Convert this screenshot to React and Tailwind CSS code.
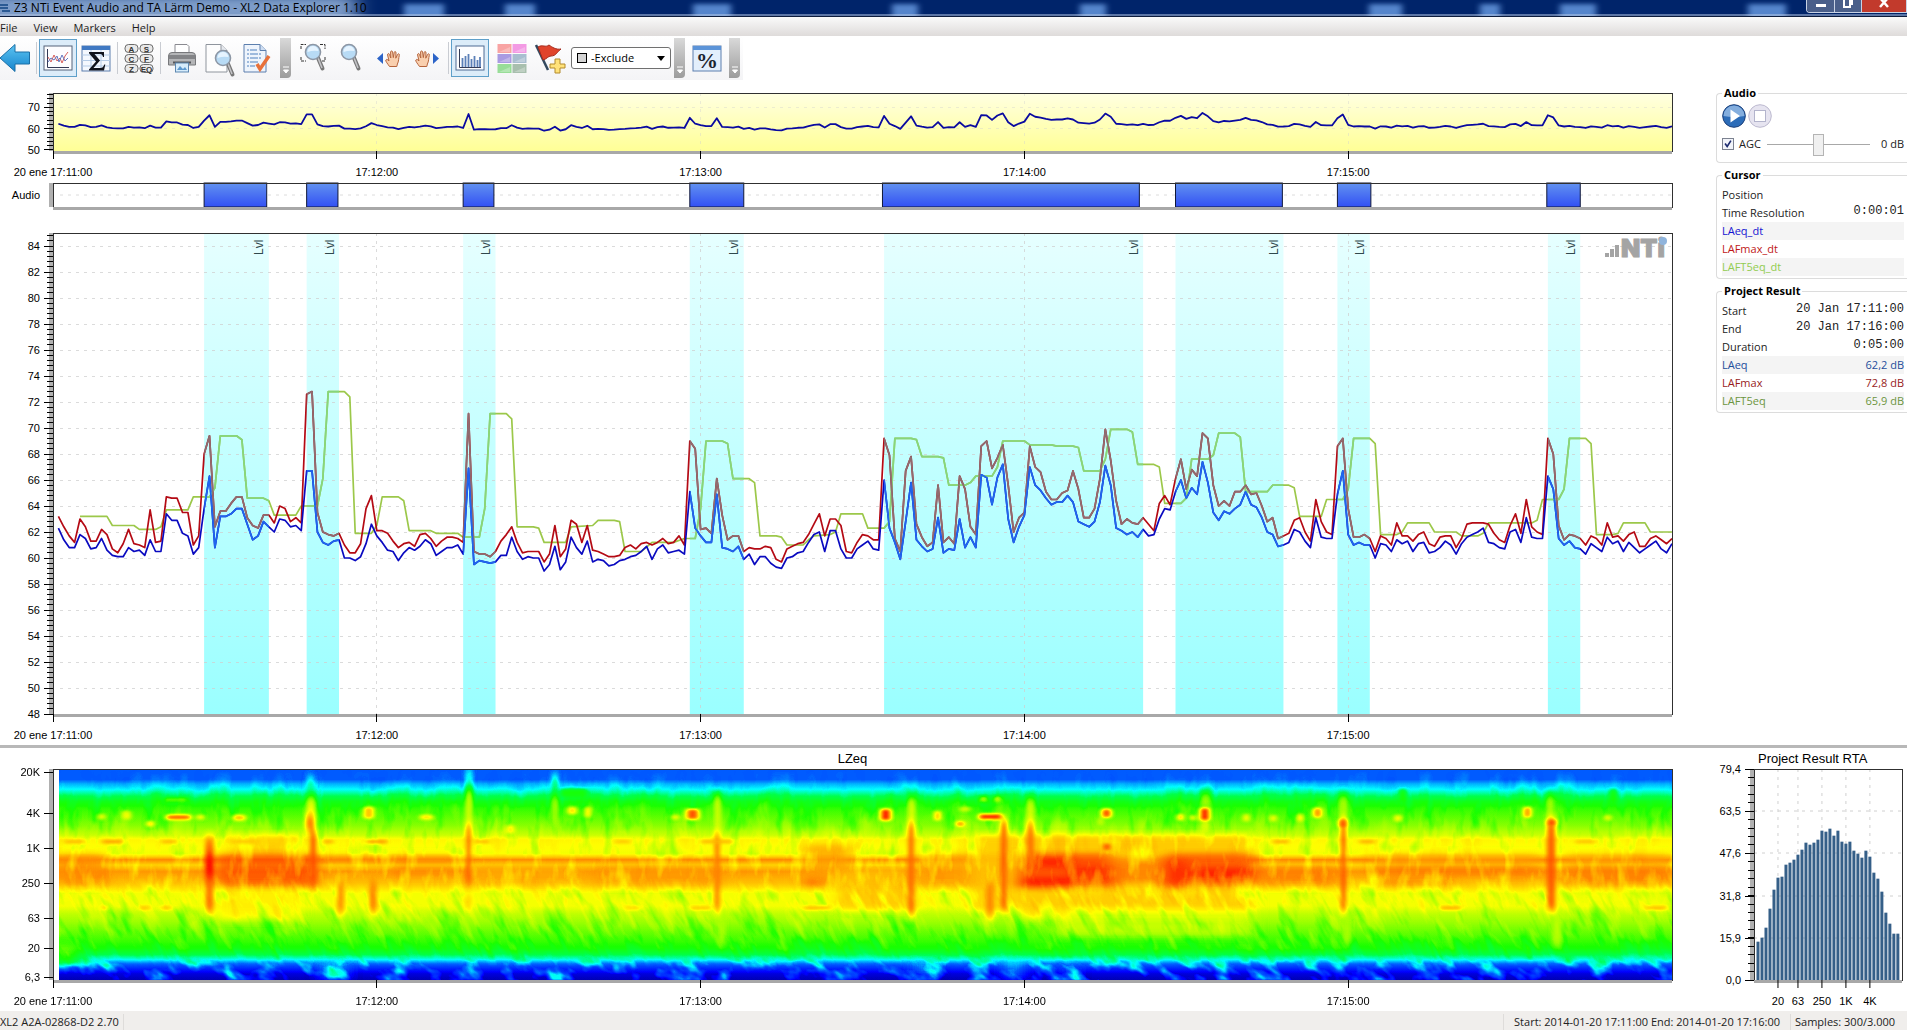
import React, { useState } from 'react';

// One value per second, 17:11:01 - 17:16:00
const LAEQ = [
  62.3, 61.4, 60.8, 60.8, 61.8, 61.5, 60.7, 60.8, 61.5, 60.6, 60.2, 60.1, 60.1, 60.8, 60.5, 60.6, 60.2, 61.4, 60.5, 60.5,
  63.4, 62.9, 62.9, 61.9, 61.7, 60.3, 60.8, 63.8, 66.3, 60.8, 63.2, 63.2, 63.4, 63.8, 63.8, 62.6, 61.4, 61.7, 62.8, 62.4,
  62, 63, 62.9, 62.4, 62.5, 62.1, 66.7, 66.7, 62, 61.2, 61, 61.3, 61.4, 60, 60, 59.8, 60.1, 61.1, 62.6, 61.7,
  61.2, 60.6, 60.5, 59.8, 60.4, 60.8, 60.6, 60.9, 61.4, 61.1, 60.2, 60.5, 60.8, 60.8, 61, 60.3, 66.9, 59.5, 59.8, 59.7,
  59.6, 59.7, 60.2, 60.2, 61.6, 60.5, 59.9, 60.1, 60, 60, 59, 59.5, 60.9, 59.1, 59.7, 61.6, 60.8, 60.3, 61.3, 59.7,
  59.9, 59.8, 59.4, 59.5, 59.8, 59.9, 60.1, 60.2, 60.5, 60.9, 59.9, 60.7, 61, 60.4, 60.5, 60.6, 60.3, 65.1, 62.3, 61.7,
  61.2, 61.2, 64.9, 60.8, 60.7, 60.5, 60.9, 59.9, 60.3, 59.5, 60.1, 60.1, 59.6, 59.3, 59.2, 60, 60.1, 60.4, 60.5, 61.2,
  61.8, 62, 60.5, 62.1, 62.1, 60.7, 60, 60, 60.7, 61, 61.3, 60.7, 60.6, 66, 62.3, 61.2, 59.9, 62.8, 65.8, 61.4,
  60.9, 60.5, 60.7, 63.1, 60.4, 60.7, 60.6, 63, 60.8, 61.6, 60.8, 66.4, 66.2, 64.1, 66.2, 67.2, 63, 61.2, 62.4, 63.3,
  67, 65.6, 65.2, 64.6, 64.1, 64.3, 64.3, 64.8, 64.3, 62.8, 62.6, 62.4, 62.8, 64.3, 67.1, 65.6, 62.3, 62.1, 61.8, 62,
  61.6, 62.2, 61.7, 61.8, 63, 63.8, 63.7, 65.1, 66, 64.6, 65.4, 64.9, 67.4, 65.8, 63.5, 62.9, 63.6, 63.4, 63.8, 64.1,
  65.1, 64.1, 63.9, 63.1, 62, 61.8, 60.9, 61, 61.2, 62.2, 62, 61.3, 60.8, 63.1, 61.6, 61.5, 61.5, 64.9, 66.7, 61.8,
  61, 61.2, 61, 61, 60, 61.1, 61, 60.5, 61.4, 61.1, 61.3, 60.5, 61.1, 61.2, 60.4, 60.5, 60.8, 61.3, 61, 60.3,
  61.1, 61.6, 61.8, 62, 62.3, 61.2, 61.1, 60.8, 60.7, 62, 62.2, 61.2, 63.1, 61.6, 61.5, 61.5, 66.3, 65.3, 61.5, 61,
  61.3, 60.8, 60.7, 60.3, 61.1, 60.8, 60.5, 61.6, 61.1, 61.3, 60.5, 61.2, 60.8, 60.4, 60.7, 61, 61.3, 60.7, 60.4, 61.1,
];

const LAFMAX = [
  63.2, 62.4, 61.7, 61.2, 63, 62.4, 61.3, 61.3, 62.2, 61.8, 60.7, 60.4, 61.1, 62.2, 61.1, 61, 60.8, 63.7, 61.2, 61.3,
  64.7, 64.6, 64.6, 63.5, 63.5, 61, 61.7, 68, 69.4, 62.4, 63.6, 63.6, 64.2, 64.7, 64.7, 63.1, 62.5, 62.3, 63.3, 63.3,
  62.7, 64, 63.8, 62.8, 63.1, 62.7, 72.6, 72.8, 63.5, 62, 61.8, 61.7, 61.9, 61, 60.4, 60.4, 61.1, 63.8, 64.8, 62.1,
  62.1, 61.9, 61.3, 60.8, 61.1, 61.2, 60.9, 61.8, 61.9, 61.5, 60.9, 61.3, 61.6, 61.6, 61.5, 61.2, 71.1, 60.5, 60.3, 60.3,
  60.1, 60.5, 61.3, 61.8, 62.4, 61.2, 60.4, 60.5, 60.5, 60.5, 59.7, 60.3, 62.5, 60.1, 60.7, 62.9, 62.6, 61.2, 62.5, 60.6,
  60.5, 60.3, 60.1, 60.1, 60.2, 60.8, 61, 60.7, 61.1, 61.2, 61, 61.2, 61.5, 61.1, 61.2, 61.7, 61, 69, 68.4, 62.2,
  62.3, 61.9, 66.1, 63.3, 61.4, 61.7, 61.7, 60.5, 60.8, 60.7, 60.7, 60.9, 60.8, 59.9, 59.7, 60.7, 60.9, 61.1, 61.2, 61.8,
  62.6, 63.4, 61.7, 63, 63, 62.5, 60.5, 60.4, 61.2, 61.8, 61.7, 61.4, 61.4, 69.2, 67.9, 61.5, 60.5, 66.7, 67.8, 62.6,
  61.6, 60.9, 61.2, 65.6, 61.2, 61.6, 61.1, 66.3, 65.3, 62.4, 61.8, 68.6, 69, 66.9, 67.7, 68.7, 65.6, 62, 63.1, 63.5,
  68.6, 67, 66.6, 65.1, 64.5, 64.5, 65, 65.2, 66.7, 65.3, 63.1, 63.1, 63.8, 66.1, 69.9, 67.5, 64.4, 62.6, 63, 62.7,
  62.6, 63.1, 62.6, 62.1, 64.2, 64.8, 64.1, 66.1, 67.6, 65.3, 66.8, 66.3, 69.6, 69.2, 65.6, 64, 64.4, 64, 65.1, 65.1,
  65.6, 64.9, 65, 64, 62.8, 63.1, 61.5, 61.7, 61.9, 62.9, 63.1, 62, 61.3, 64.5, 62.8, 62, 61.8, 68.6, 69.2, 63.8,
  61.6, 61.6, 61.8, 61.5, 60.5, 61.7, 61.5, 61, 62.7, 61.7, 61.7, 61.3, 61.8, 62, 61.1, 60.9, 61.6, 61.7, 61.7, 60.8,
  61.5, 62.6, 62.7, 62.7, 62.7, 62.6, 61.9, 61.4, 61.2, 62.5, 63.4, 61.9, 64.5, 62.4, 62, 61.8, 69.2, 68, 62.5, 61.4,
  61.8, 61.7, 61.5, 61, 61.7, 61.5, 61, 62.7, 61.6, 61.7, 61.3, 61.8, 62, 60.9, 60.9, 61.5, 61.7, 61.4, 61.1, 61.5,
];

// [second, dB], the level holds for five seconds so only the corners are kept
const LAFT5 = [
  [5, 63.2], [10, 63.2], [11, 62.5], [15, 62.5], [16, 62.2], [19, 62.2], [20, 62.4], [21, 63.7], [25, 63.7], [26, 64.7],
  [29, 64.7], [30, 65.4], [31, 69.4], [34, 69.4], [35, 69.1], [36, 64.6], [39, 64.6], [40, 64.4], [41, 63.3], [45, 63.3],
  [46, 64], [49, 64], [50, 66.1], [51, 72.8], [54, 72.8], [55, 72.4], [56, 61.9], [59, 61.9], [60, 62.5], [61, 64.7],
  [64, 64.7], [65, 64.4], [66, 62.1], [70, 62.1], [71, 61.9], [75, 61.9], [76, 61.6], [79, 61.6], [80, 63.8], [81, 71.1],
  [84, 71.1], [85, 70.7], [86, 62.4], [89, 62.4], [90, 62.3], [91, 61.2], [95, 61.2], [96, 62.4], [100, 62.5], [101, 62.9],
  [104, 62.9], [105, 62.8], [106, 60.5], [109, 60.5], [111, 61.2], [115, 61.2], [117, 61.5], [119, 61.5], [120, 63.8],
  [121, 69], [124, 69], [125, 68.8], [126, 66.1], [129, 66.1], [130, 65.8], [131, 61.7], [134, 61.7], [135, 61.6], [136, 61],
  [139, 61], [140, 61.4], [141, 61.7], [144, 61.8], [145, 62], [146, 63.4], [150, 63.4], [151, 62.3], [154, 62.3], [155, 62.8],
  [156, 69.2], [159, 69.2], [160, 69.1], [161, 67.8], [164, 67.8], [165, 67.7], [166, 65.6], [169, 65.6], [170, 65.8],
  [171, 66.3], [174, 66.3], [175, 67], [176, 69], [180, 69], [181, 68.7], [185, 68.7], [186, 68.6], [189, 68.6], [190, 68.5],
  [191, 66.7], [194, 66.7], [195, 67.6], [196, 69.9], [199, 69.9], [200, 69.7], [201, 67.2], [204, 67.2], [205, 67],
  [206, 64.2], [209, 64.2], [210, 64.6], [211, 67.6], [214, 67.6], [215, 67.9], [216, 69.6], [219, 69.6], [220, 69.3],
  [221, 65.1], [225, 65.1], [226, 65.6], [229, 65.6], [230, 65.4], [231, 63.2], [235, 63.2], [236, 64.5], [239, 64.5],
  [240, 65.3], [241, 69.2], [244, 69.2], [245, 68.8], [246, 61.8], [249, 61.8], [250, 62], [251, 62.7], [255, 62.7],
  [256, 62], [260, 62], [261, 61.7], [264, 61.7], [265, 61.9], [266, 62.7], [274, 62.7], [275, 62.9], [276, 64.5],
  [279, 64.5], [280, 65.3], [281, 69.2], [284, 69.2], [285, 68.8], [286, 61.8], [289, 61.8], [290, 61.9], [291, 62.7],
  [295, 62.7], [296, 62], [300, 62],
];

const EVENTS = [[28, 40, 8], [47, 53, 7], [76, 82, 8], [118, 128, 8], [154, 202, 7], [208, 228, 7], [238, 244, 8], [277, 283, 7]];
const CLIPS = [[28, 39.6], [47, 52.8], [76, 81.7], [118, 128], [153.7, 201.3], [208, 227.8], [238, 244.2], [276.8, 283]];
const MINUTES = ['20 ene 17:11:00', '17:12:00', '17:13:00', '17:14:00', '17:15:00'];

const RTA = [
  115, 127, 157, 214, 271, 307, 310, 346, 352, 361, 376, 391, 412, 406, 412, 421, 448, 445,
  454, 433, 448, 415, 409, 415, 388, 379, 367, 388, 370, 322, 304, 265, 202, 169, 139, 139,
];

const samples = (values) => values.map((v, i) => [i + 1, v]);
const toPoints = (data, max, scale) => data.map(([t, v]) => `${t},${((max - v) * scale).toFixed(2)}`).join(' ');
const range = (from, to, step) => Array.from({ length: Math.floor((to - from) / step + 1.01) }, (_, i) => from + i * step);

const AXIS_TEXT = "font-['Liberation_Sans',sans-serif] text-[11px] fill-black";

function AxisY({ majors, minors }) {
  return (
    <>
      <rect x="-4" y="0" width="4" height="100%" fill="#b0b0b0" />
      {minors.map((y) => <line key={y} x1="-6" x2="0" y1={y} y2={y} stroke="#000" shapeRendering="crispEdges" />)}
      {majors.map(([y, label]) => (
        <g key={label}>
          <line x1="-9" x2="0" y1={y} y2={y} stroke="#000" shapeRendering="crispEdges" />
          <text x="-13" y={y} dy="4" textAnchor="end" className={AXIS_TEXT}>{label}</text>
        </g>
      ))}
    </>
  );
}

function AxisX({ labels = MINUTES }) {
  return (
    <svg y="100%" className="overflow-visible">
      <rect x="0" y="0" width="100%" height="3" fill="#a8a8a8" />
      {labels.map((label, i) => (
        <g key={label}>
          <line x1={`${i * 20}%`} x2={`${i * 20}%`} y1="0" y2="8" stroke="#000" shapeRendering="crispEdges" />
          <text x={`${i * 20}%`} y="25" textAnchor="middle" className={AXIS_TEXT}>{label}</text>
        </g>
      ))}
    </svg>
  );
}

function Frame() {
  return <rect x="0" y="0" width="100%" height="100%" fill="none" stroke="#303030" shapeRendering="crispEdges" />;
}

function Grid({ rows }) {
  return (
    <g stroke="#d0d0d0" strokeDasharray="3 5" shapeRendering="crispEdges">
      {rows.map((y) => <line key={y} x1="7" x2="100%" y1={y} y2={y} />)}
      {[20, 40, 60, 80].map((x) => <line key={x} x1={`${x}%`} x2={`${x}%`} y1="0" y2="100%" />)}
    </g>
  );
}

function OverviewChart() {
  const y = (v) => (76.8 - v) * 2.12;
  return (
    <svg className="block w-full h-[58px] overflow-visible" role="img" aria-label="Overview">
      <defs>
        <linearGradient id="overviewFill" x2="0" y2="1">
          <stop offset="0" stopColor="#ffffe2" />
          <stop offset="1" stopColor="#ffff96" />
        </linearGradient>
      </defs>
      <rect width="100%" height="100%" fill="url(#overviewFill)" />
      <g opacity="0.4"><Grid rows={[y(70), y(60)]} /></g>
      <AxisY majors={[70, 60, 50].map((v) => [y(v), v])} minors={range(50, 76, 2).map(y)} />
      <svg viewBox="0 0 300 58" width="100%" height="100%" preserveAspectRatio="none">
        <polyline
          points={toPoints(samples(LAEQ), 76.8, 2.12)}
          fill="none" stroke="#0a0aa0" strokeWidth="1.8" strokeLinejoin="round" vectorEffect="non-scaling-stroke"
        />
      </svg>
      <Frame />
      <AxisX />
    </svg>
  );
}

function AudioTrack() {
  return (
    <svg className="block w-full h-[24px] overflow-visible" role="img" aria-label="Audio recordings">
      <defs>
        <linearGradient id="clipFill" x2="0" y2="1">
          <stop offset="0" stopColor="#6292f0" />
          <stop offset="1" stopColor="#3250f4" />
        </linearGradient>
      </defs>
      <rect x="-4" width="4" height="100%" fill="#b0b0b0" />
      <line x1="7" x2="100%" y1="12" y2="12" stroke="#dcdcdc" strokeDasharray="3 5" />
      {CLIPS.map(([from, to]) => (
        <rect key={from} x={`${from / 3}%`} width={`${(to - from) / 3}%`} height="100%" fill="url(#clipFill)" stroke="#101838" />
      ))}
      <Frame />
      <text x="-13" y="16" textAnchor="end" className={AXIS_TEXT}>Audio</text>
      <rect x="0" y="24" width="100%" height="3" fill="#a8a8a8" />
    </svg>
  );
}

function Curves({ green, red, blue }) {
  return (
    <g fill="none" strokeWidth="1.7" strokeLinejoin="round">
      <polyline points={toPoints(LAFT5, 85, 13)} stroke={green} vectorEffect="non-scaling-stroke" />
      <polyline points={toPoints(samples(LAFMAX), 85, 13)} stroke={red} vectorEffect="non-scaling-stroke" />
      <polyline points={toPoints(samples(LAEQ), 85, 13)} stroke={blue} vectorEffect="non-scaling-stroke" />
    </g>
  );
}

function LevelChart() {
  const y = (v) => (85 - v) * 13;
  return (
    <svg className="block w-full h-[481px] overflow-visible" role="img" aria-label="Level over time">
      <defs>
        <linearGradient id="eventFill" x2="0" y2="1">
          <stop offset="0" stopColor="#e6ffff" />
          <stop offset="1" stopColor="#9affff" />
        </linearGradient>
        <clipPath id="eventClip">
          {EVENTS.map(([from, to]) => <rect key={from} x={from} width={to - from} height="481" />)}
        </clipPath>
      </defs>
      {EVENTS.map(([from, to]) => (
        <rect key={from} x={`${from / 3}%`} width={`${(to - from) / 3}%`} height="100%" fill="url(#eventFill)" />
      ))}
      <g opacity="0.75"><Grid rows={range(50, 84, 2).map(y)} /></g>
      <svg viewBox="0 0 300 481" width="100%" height="100%" preserveAspectRatio="none">
        <Curves green="#9cc84a" red="#b40a14" blue="#0a0ac0" />
        <g clipPath="url(#eventClip)">
          <Curves green="#86d67c" red="#8e6c70" blue="#1e66ee" />
        </g>
      </svg>
      {EVENTS.map(([from, to, inset]) => (
        <svg key={from} x={`${to / 3}%`} y="22" className="overflow-visible">
          <text transform={`translate(${-inset + 2} 0) rotate(-90)`} className="font-['Liberation_Sans',sans-serif] text-[12px] fill-[#30484c]">Lvl</text>
        </svg>
      ))}
      <svg x="100%" y="6" className="overflow-visible" aria-label="NTi">
        <g fill="#a4a4a4">
          <rect x="-67" y="14" width="4" height="4" />
          <rect x="-62" y="10" width="4" height="8" />
          <rect x="-57" y="6" width="4" height="12" />
          <text x="-51" y="18" stroke="#a4a4a4" className="font-['Inter',sans-serif] text-[25px] font-black">NTi</text>
        </g>
        <circle cx="-9" cy="2" r="4" fill="#8fb4dc" />
      </svg>
      <AxisY majors={range(48, 84, 2).map((v) => [y(v), v])} minors={range(48, 84.8, 0.4).map(y)} />
      <Frame />
      <AxisX />
    </svg>
  );
}

// Level against height, 0 = cold, 1 = hot
const PROFILE = [
  [0, 0.2], [0.05, 0.2], [0.07, 0.25], [0.1, 0.31], [0.125, 0.39], [0.155, 0.47], [0.19, 0.52], [0.27, 0.59], [0.315, 0.65],
  [0.335, 0.71], [0.36, 0.7], [0.4, 0.69], [0.415, 0.76], [0.43, 0.86], [0.455, 0.76], [0.485, 0.84], [0.54, 0.79],
  [0.565, 0.74], [0.59, 0.69], [0.65, 0.69], [0.685, 0.64], [0.75, 0.58], [0.81, 0.53], [0.85, 0.49], [0.877, 0.42],
  [0.9, 0.32], [0.92, 0.22], [0.945, 0.14], [0.97, 0.08], [1, 0.05],
];

// [from second, to second, top, bottom, level]
const REGIONS = [
  [0, 10, 84, 116, 0.86], [33, 46, 66, 84, 0.77], [30, 45, 118, 150, 0.73], [49, 76, 86, 93, 0.86],
  [62, 76, 98, 106, 0.86], [78, 98, 96, 114, 0.82], [100, 124, 96, 116, 0.84], [139, 148, 75, 110, 0.83], [139, 143, 110, 117, 0.92],
  [145, 160, 100, 140, 0.79], [160, 178, 84, 116, 0.83], [170, 180, 66, 140, 0.78], [180, 222, 66, 148, 0.79],
  [30, 49, 84, 117, 0.93], [179, 196, 84, 116, 0.94], [179, 189, 108, 118, 1], [182, 188, 88, 98, 0.98], [188, 197, 95, 116, 0.96],
  [196, 206, 90, 114, 0.87], [206, 223, 84, 116, 0.93], [211, 222, 98, 110, 0.98], [206, 210, 90, 118, 0.97],
  [224, 238, 96, 116, 0.87], [244, 276, 96, 106, 0.88], [246, 260, 110, 116, 0.88],
  [280, 300, 96, 116, 0.87], [280, 300, 84, 92, 0.83], [244, 276, 84, 92, 0.83], [186, 222, 140, 166, 0.66], [50, 54, 192, 210, 0.3],
  [160, 163, 190, 206, 0.28], [177, 179, 188, 210, 0.34], [188, 189, 195, 210, 0.3], [0, 4, 175, 195, 0.6],
];

const STREAKS = [
  [28.2, 29.8, 68, 143, 0.9], [28.2, 29.8, 84, 108, 1], [47, 48.6, 28, 60, 0.7], [46.8, 48.4, 46, 62, 0.9], [47.6, 48.8, 62, 118, 0.92],
  [52.6, 54, 112, 144, 0.86], [58.6, 60, 112, 144, 0.88], [76.4, 77.8, 0, 20, 0.33], [76.4, 77.8, 20, 60, 0.66], [76.5, 77.5, 56, 116, 0.91],
  [76.4, 77.6, 128, 134, 0.84], [92.4, 93.6, 6, 26, 0.4], [92.4, 93.6, 26, 60, 0.62], [122.5, 123.8, 26, 66, 0.66], [122.5, 123.6, 64, 142, 0.88],
  [123.2, 124.6, 142, 176, 0.62], [158.4, 159.8, 28, 58, 0.68], [158.4, 159.6, 54, 146, 0.9], [172.8, 174.4, 112, 148, 0.86],
  [175.6, 176.8, 50, 140, 0.92], [180.4, 181.8, 30, 58, 0.67], [180.4, 181.8, 54, 90, 0.89], [238.2, 240, 26, 50, 0.62],
  [238.6, 239.6, 50, 142, 0.92], [239, 240.6, 142, 176, 0.62], [276.6, 278.2, 26, 54, 0.62], [276.8, 278.4, 50, 142, 0.92],
  [277.8, 279.6, 142, 176, 0.64], [212.6, 214.4, 24, 40, 0.62], [212.6, 214.4, 50, 66, 0.68], [47, 48.4, 8, 26, 0.36],
];

const DOTS = [
  [21, 25.5, 46, 50, 0.95], [17.4, 18.6, 52, 57, 0.8], [8.4, 9.6, 45, 50, 0.72], [12.8, 14.4, 42, 50, 0.7], [26.6, 28, 46, 50, 0.74],
  [33.4, 35.6, 46, 51, 0.8], [57.6, 59.4, 38, 49, 0.8], [68, 70.4, 46, 50, 0.76], [84, 85.4, 56, 64, 0.74], [95.4, 97, 38, 45, 0.76],
  [98.6, 99.6, 38, 48, 0.76], [20.6, 25, 29, 32, 0.6], [114.6, 116, 46, 50, 0.72], [117.4, 119.6, 40, 50, 0.94], [153.4, 155.2, 40, 51, 1],
  [163.4, 164.4, 42, 51, 0.84], [167.4, 168.8, 52, 57, 0.88], [171.6, 175.8, 45, 50, 1], [171.8, 173, 27, 33, 0.68], [174.4, 175.6, 27, 33, 0.68],
  [168, 170, 38, 42, 0.68], [194.4, 196, 40, 48, 0.96], [194.6, 196, 74, 81, 0.93], [193.8, 194.4, 48, 56, 0.7], [208.4, 209.4, 45, 51, 0.84],
  [210.8, 211.6, 46, 51, 0.8], [212.6, 214.2, 39, 51, 1], [220.6, 221.6, 45, 52, 0.74], [225.6, 226.6, 46, 52, 0.74],
  [230.6, 231.6, 45, 52, 0.76], [233.6, 235, 39, 48, 0.88], [238.4, 239.6, 50, 58, 0.94], [248.6, 249.8, 46, 52, 0.74], [272.6, 273.8, 38, 48, 0.9],
  [277, 278.4, 50, 56, 0.94], [287.6, 288.6, 46, 51, 0.74], [249.6, 250.6, 20, 33, 0.52], [288.6, 289.6, 20, 33, 0.52],
  [94, 99, 20, 28, 0.49], [2, 6, 71, 74, 0.8], [9, 13, 71, 74, 0.84], [33, 38, 71, 74, 0.78], [20, 23, 71, 74, 0.8], [50, 52, 71, 74, 0.82],
  [58, 62, 71, 74, 0.85], [78, 81, 71, 74, 0.8], [104, 107, 71, 74, 0.78], [120, 126, 71, 74, 0.8], [226, 229, 71, 74, 0.82],
  [242, 245, 71, 74, 0.82], [282, 286, 71, 74, 0.79], [9, 10, 136, 140, 0.8], [16, 18, 136, 140, 0.79], [20, 22, 136, 140, 0.79],
  [106, 109, 136, 140, 0.76], [118, 122, 136, 140, 0.78], [139, 144, 136, 140, 0.8], [257, 261, 136, 140, 0.82], [295, 299, 136, 140, 0.8],
];

const gray = (v) => `rgb(${Math.round(v * 255)} ${Math.round(v * 255)} ${Math.round(v * 255)})`;

function Patches({ items, opacity }) {
  return items.map(([from, to, top, bottom, level], i) => (
    <rect key={i} x={from * 5.397} y={top} width={(to - from) * 5.397} height={bottom - top} rx="2" fill={gray(level)} opacity={opacity} />
  ));
}

function Spectrogram() {
  return (
    <svg className="block w-full h-[211px] overflow-visible" role="img" aria-label="LZeq spectrogram">
      <svg viewBox="0 0 1619 210" width="100%" height="100%" preserveAspectRatio="none">
        <defs>
          <linearGradient id="profile" x2="0" y2="1">
            {PROFILE.map(([offset, level]) => <stop key={offset} offset={offset} stopColor={gray(level)} />)}
          </linearGradient>
          <linearGradient id="lowBand" x2="0" y2="1">
            <stop offset="0" stopColor="#000" />
            <stop offset="0.3" stopColor="#fff" />
          </linearGradient>
          <linearGradient id="midBand" x2="0" y2="1">
            <stop offset="0" stopColor="#000" />
            <stop offset="0.2" stopColor="#fff" />
            <stop offset="0.8" stopColor="#fff" />
            <stop offset="1" stopColor="#000" />
          </linearGradient>
          <mask id="lowMask" maskUnits="userSpaceOnUse" x="0" y="184" width="1619" height="26">
            <rect y="184" width="1619" height="26" fill="url(#lowBand)" />
          </mask>
          <mask id="midMask" maskUnits="userSpaceOnUse" x="0" y="108" width="1619" height="90">
            <rect y="108" width="1619" height="90" fill="url(#midBand)" />
          </mask>
          <mask id="highMask" maskUnits="userSpaceOnUse" x="0" y="0" width="1619" height="136">
            <rect width="1619" height="136" fill="url(#midBand)" />
          </mask>
          <filter id="soft9" x="-5%" y="-5%" width="110%" height="110%"><feGaussianBlur stdDeviation="8 3" /></filter>
          <filter id="soft2" x="-5%" y="-5%" width="110%" height="110%"><feGaussianBlur stdDeviation="2 5" /></filter>
          <filter id="soft1" x="-5%" y="-5%" width="110%" height="110%"><feGaussianBlur stdDeviation="2.5 1.7" /></filter>
          <filter id="warm" x="0" y="0" width="100%" height="100%" colorInterpolationFilters="sRGB">
            <feTurbulence type="fractalNoise" baseFrequency="0.09 0.03" numOctaves="3" seed="4" />
            <feColorMatrix values="0 0 0 0 1  0 0 0 0 1  0 0 0 0 1  1.2 0 0 0 -0.6" />
          </filter>
          <filter id="cool" x="0" y="0" width="100%" height="100%" colorInterpolationFilters="sRGB">
            <feTurbulence type="fractalNoise" baseFrequency="0.08 0.03" numOctaves="3" seed="11" />
            <feColorMatrix values="0 0 0 0 0  0 0 0 0 0  0 0 0 0 0  0.6 0 0 0 -0.29" />
          </filter>
          <filter id="grain" x="0" y="0" width="100%" height="100%" colorInterpolationFilters="sRGB">
            <feTurbulence type="fractalNoise" baseFrequency="0.05 0.02" numOctaves="3" seed="23" />
            <feColorMatrix values="0 0 0 0 1  0 0 0 0 1  0 0 0 0 1  1.2 0 0 0 -0.6" />
          </filter>
          <filter id="low" x="0" y="0" width="100%" height="100%" colorInterpolationFilters="sRGB">
            <feTurbulence type="fractalNoise" baseFrequency="0.045 0.05" numOctaves="3" seed="7" />
            <feColorMatrix values="0 0 0 0 .55  0 0 0 0 .55  0 0 0 0 .55  3 0 0 0 -1.4" />
          </filter>
          <filter id="heat" x="0" y="0" width="100%" height="100%" colorInterpolationFilters="sRGB">
            <feComponentTransfer>
              <feFuncR type="table" tableValues="0 0 0 0 0 0.1 0.6 1 1 1 1" />
              <feFuncG type="table" tableValues="0 0 0.36 1 1 1 1 1 0.72 0.4 0" />
              <feFuncB type="table" tableValues="0.4 1 1 1 0.3 0 0 0 0 0 0" />
            </feComponentTransfer>
          </filter>
          <clipPath id="specClip"><rect x="6" width="1613" height="210" /></clipPath>
        </defs>
        <g clipPath="url(#specClip)">
          <g filter="url(#heat)">
            <rect width="1619" height="210" fill="url(#profile)" />
            <g filter="url(#soft9)"><Patches items={REGIONS} opacity="0.8" /></g>
            <g mask="url(#lowMask)">
              <g transform="skewX(30)"><rect x="-160" y="182" width="1800" height="28" filter="url(#low)" opacity="0.5" /></g>
            </g>
            <g mask="url(#highMask)">
              <rect width="1619" height="136" filter="url(#grain)" opacity="0.25" />
              <rect width="1619" height="136" filter="url(#cool)" opacity="0.5" />
            </g>
            <g mask="url(#midMask)">
              <g transform="skewX(25)">
                <rect x="-110" y="108" width="1740" height="90" filter="url(#warm)" opacity="0.3" />
                <rect x="-110" y="108" width="1740" height="90" filter="url(#cool)" opacity="0.6" />
              </g>
            </g>
            <g filter="url(#soft2)"><Patches items={STREAKS} opacity="0.9" /></g>
            <g filter="url(#soft1)"><Patches items={DOTS} opacity="0.95" /></g>
          </g>
        </g>
      </svg>
      <AxisY
        majors={[[3, '20K'], [44, '4K'], [79, '1K'], [114, '250'], [149, '63'], [179, '20'], [208, '6,3']]}
        minors={[]}
      />
      <Frame />
      <AxisX />
    </svg>
  );
}

function RtaChart() {
  const rows = [[0, '79,4'], [42, '63,5'], [84, '47,6'], [127, '31,8'], [169, '15,9'], [211, '0,0']];
  const columns = [[5, '20'], [10, '63'], [16, '250'], [22, '1K'], [28, '4K']];
  const x = (i) => `${2.7 + i * 2.7}%`;
  return (
    <svg className="block w-full h-[211px] overflow-visible" role="img" aria-label="Project Result RTA">
      <g stroke="#d0d0d0" strokeDasharray="3 5">
        {rows.slice(1, 5).map(([y]) => <line key={y} x1="0" x2="100%" y1={y} y2={y} />)}
        {columns.map(([i]) => <line key={i} x1={x(i)} x2={x(i)} y1="0" y2="100%" />)}
      </g>
      {RTA.map((h, i) => (
        <svg key={i} x={x(i)} className="overflow-visible">
          <rect x="-1.5" y={211 - h / 3} width="3" height={h / 3} fill="#355f88" />
        </svg>
      ))}
      <AxisY majors={rows} minors={range(0, 211, 8.44)} />
      <Frame />
      <svg y="100%" className="overflow-visible">
        <rect width="100%" height="3" fill="#a8a8a8" />
        {columns.map(([i, label]) => (
          <g key={label}>
            <line x1={x(i)} x2={x(i)} y1="0" y2="8" stroke="#000" />
            <text x={x(i)} y="25" textAnchor="middle" className={AXIS_TEXT}>{label}</text>
          </g>
        ))}
      </svg>
    </svg>
  );
}

function Lens({ cx, cy, r }) {
  return (
    <g>
      <line x1={cx + r * 0.65} y1={cy + r * 0.75} x2={cx + r + 2} y2={cy + r + 9} stroke="#777" strokeWidth="4" strokeLinecap="round" />
      <line x1={cx + r * 0.7} y1={cy + r * 0.85} x2={cx + r + 1.5} y2={cy + r + 8.5} stroke="#c4c4c8" strokeWidth="1.5" />
      <circle cx={cx} cy={cy} r={r} fill="#b8dbf5" stroke="#8d97a5" strokeWidth="1.6" />
      <path d={`M${cx - r + 2} ${cy} A${r - 2} ${r - 2} 0 0 1 ${cx + r - 2} ${cy - 1} Q${cx} ${cy - 2} ${cx - r + 2} ${cy}Z`} fill="#e6f4ff" />
    </g>
  );
}

function Hand() {
  return (
    <path
      d="M4.5 17.5 C2.5 14.5 0.5 12.5 0.8 11 C1.4 9.8 2.8 10.6 4 12 L2.6 6 C2.4 4.4 4 4 4.5 5.4 L5.8 9 L5.6 3 C5.7 1.6 7.4 1.6 7.6 3 L8.3 8.6 L9.2 3.4 C9.6 2 11.2 2.4 11 4 L10.8 9.2 L12.6 5.4 C13.4 4.2 14.8 4.9 14.3 6.4 C13.6 9 13.8 12.5 12.4 15 L11.8 17.5 Z"
      fill="#f9cfae" stroke="#b5643c" strokeWidth="1"
    />
  );
}

const ICONS = {
  chart: (
    <g fill="none">
      <rect x="1" y="3" width="28" height="24" fill="#fdfdff" stroke="#55627a" />
      <path d="M4.5 6 V24.5 H26" stroke="#333a55" />
      <path d="M5 14 L8 19 L11 12 L14 18 L17 15 L19 20 L22 13 L25 9" stroke="#d8605c" />
      <path d="M5 19 L8 15 L11 17 L14 13 L16 19 L19 12 L22 18 L25 15" stroke="#6478c0" />
    </g>
  ),
  sum: (
    <g>
      <rect x="1" y="3" width="28" height="25" fill="#f4f8fe" stroke="#5c7fae" />
      <rect x="1" y="3" width="28" height="4" fill="#3f78c2" />
      <path d="M1 12 H29 M1 17.5 H29 M1 23 H29 M10 7 V28 M20 7 V28" stroke="#b4cbe6" fill="none" />
      <path d="M8 9 H23 V14 H22 C21.5 11.5 20.5 11 18 11 H13.5 L19 17.5 L12.5 25 H19 C21.5 25 22.5 24 23.3 21.5 H24.3 L23 27.5 H8 V26.5 L15 18.5 L8 10.2 Z" fill="#10131c" />
    </g>
  ),
  weights: (
    <g className="font-['Liberation_Sans',sans-serif] text-[8px] font-bold">
      {['A', 'S', 'C', 'F', 'Z', 'EQ'].map((s, i) => (
        <g key={s}>
          <rect x={1 + (i % 2) * 15} y={1.5 + Math.floor(i / 2) * 10} width="13" height="8" rx="3.5" fill="#e9e9e9" stroke="#6b6b6b" />
          <text x={7.5 + (i % 2) * 15} y={8.5 + Math.floor(i / 2) * 10} textAnchor="middle" fill="#333">{s}</text>
        </g>
      ))}
    </g>
  ),
  print: (
    <g>
      <path d="M8 10 V1.5 H20 L22 3.5 V10" fill="#fff" stroke="#8a8a90" />
      <path d="M1.5 13 Q1.5 9.5 5 9.5 H25 Q28.5 9.5 28.5 13 V22 H1.5 Z" fill="#b4b5b7" stroke="#77787b" />
      <rect x="1.5" y="12" width="27" height="4" fill="#838487" />
      <path d="M6 19.5 H24" stroke="#55565a" strokeWidth="2" />
      <rect x="8.5" y="20" width="13" height="9" fill="#d6ecfb" stroke="#5c87b0" />
      <path d="M10 27 L13 23 L16 26 L18 24 L20 27 Z" fill="#5b98cf" />
    </g>
  ),
  preview: (
    <g>
      <path d="M1 1.5 H16 L22 7.5 V29 H1 Z" fill="#fdfdfd" stroke="#8f959d" />
      <path d="M16 1.5 V7.5 H22" fill="#e6e9ee" stroke="#8f959d" />
      <Lens cx={18} cy={15} r={7.5} />
    </g>
  ),
  report: (
    <g fill="none">
      <path d="M1 1.5 H17 L23 7.5 V29 H1 Z" fill="#eef4fc" stroke="#5c7fae" />
      <path d="M17 1.5 V7.5 H23" fill="#cfdef2" stroke="#5c7fae" />
      <path d="M4 7 H14 M4 11 H19 M4 15 H19 M4 19 H15 M4 23 H12" stroke="#4f80be" strokeDasharray="2 1 8 1" />
      <path d="M14 21 L17 26 L26 13" stroke="#e8713a" strokeWidth="3.5" />
    </g>
  ),
  zoomArea: (
    <g>
      <path d="M3 6 V1.5 H8 M22 1.5 H27 V6 M3 14 V18 H8 M27 14 V18 H22" fill="none" stroke="#333" strokeDasharray="3 1" />
      <Lens cx={15} cy={9} r={7.5} />
    </g>
  ),
  zoom: <Lens cx={13} cy={9} r={7.5} />,
  panLeft: (
    <g>
      <path d="M9 10 V21 L3 15.5 Z" fill="#2c64c8" />
      <g transform="translate(11 6)"><Hand /></g>
    </g>
  ),
  panRight: (
    <g>
      <path d="M21 10 V21 L27 15.5 Z" fill="#2c64c8" />
      <g transform="translate(3 6)"><Hand /></g>
    </g>
  ),
  bars: (
    <g>
      <rect x="1" y="3" width="28" height="24" fill="#fdfdff" stroke="#4f6b93" />
      <path d="M4.5 6 V24.5 H26" fill="none" stroke="#333a55" />
      <path d="M7.5 24 V15 M10.5 24 V13 M13.5 24 V11 M16.5 24 V16 M19.5 24 V13 M22.5 24 V17 M25 24 V14" stroke="#5b7fb8" strokeWidth="1.8" />
    </g>
  ),
  palette: (
    <g>
      {['#f8a3a3', '#f39ae4', '#a99be2', '#a9bed0', '#98dd98', '#a8bfae'].map((c, i) => (
        <g key={c}>
          <rect x={0.5 + (i % 2) * 15} y={1 + Math.floor(i / 2) * 10} width="14" height="9" fill={c} />
          <path d={`M${2 + (i % 2) * 15} ${9 + Math.floor(i / 2) * 10} l11 -5 v5 Z`} fill="#ffffff44" />
        </g>
      ))}
    </g>
  ),
  flag: (
    <g>
      <path d="M1 2 L13 27" stroke="#33495f" strokeWidth="2.5" />
      <path d="M3 4 C8 1 10 5 14 2 C17 4 21 7 26 6 C22 9 21 13 16 13 C13 13 12 16 8 17 Z" fill="#e0442c" stroke="#a32a1c" />
      <path d="M20 16 H25 V21 H30 V25 H25 V30 H20 V25 H15 V21 H20 Z" fill="#ffe27a" stroke="#b28a2c" />
    </g>
  ),
  percent: (
    <g>
      <rect x="1" y="3" width="28" height="25" fill="#e3effc" stroke="#5c7fae" />
      <rect x="1" y="3" width="28" height="4" fill="#5b93d8" />
      <text x="15" y="25" textAnchor="middle" className="font-['Liberation_Serif',serif] text-[22px] font-bold" fill="#1c2430">%</text>
    </g>
  ),
};

function Tool({ icon, label, active }) {
  return (
    <button
      type="button"
      title={label}
      aria-label={label}
      aria-pressed={active}
      className={`flex h-[38px] w-[38px] shrink-0 items-center justify-center border ${active ? 'border-[#5e9fc9] bg-[#dcecf9]' : 'border-transparent'}`}
    >
      <svg viewBox="0 0 30 30" className="h-[30px] w-[30px] overflow-visible">{ICONS[icon]}</svg>
    </button>
  );
}

const Divider = () => <div className="mx-[2px] h-8 w-px shrink-0 bg-[#c9ccd2]" />;

function Overflow() {
  return (
    <button type="button" aria-label="Toolbar options" className="mx-[3px] flex h-10 w-[11px] shrink-0 items-end justify-center rounded-br-sm bg-linear-to-b from-[#d9d9d9] to-[#9c9c9c] pb-1">
      <svg viewBox="0 0 8 8" className="h-2 w-2"><path d="M1 1 H7 M1.5 4 H6.5 L4 7 Z" stroke="#fff" fill="#fff" /></svg>
    </button>
  );
}

function TitleBar() {
  const glows = [[404, 40], [505, 30], [693, 38], [892, 26], [1080, 26], [1369, 33], [1480, 20], [1560, 36], [1748, 38]];
  return (
    <header className="relative flex h-[17px] items-start justify-between border-b border-[#0c1c3c] bg-[#00246a]">
      <svg className="absolute inset-0 h-full w-full" viewBox="0 0 1907 16" preserveAspectRatio="none" aria-hidden="true">
        <defs>
          <filter id="glow" x="-30%" y="-30%" width="160%" height="160%"><feGaussianBlur stdDeviation="3 2" /></filter>
          <filter id="haze" x="-20%" y="-50%" width="140%" height="200%"><feGaussianBlur stdDeviation="10 4" /></filter>
        </defs>
        <rect x="-20" y="-4" width="376" height="26" fill="#7d9cc9" filter="url(#haze)" />
        {glows.map(([x, w]) => <rect key={x} x={x} y="4" width={w} height="20" fill="#5585cc" filter="url(#glow)" />)}
        <line x1="0" x2="1907" y1="15" y2="15" stroke="#b9c8e2" />
      </svg>
      <h1 className="relative flex items-center gap-1 whitespace-nowrap text-[12px] leading-[16px] text-black">
        <svg viewBox="0 0 10 10" className="h-[10px] w-[10px]"><path d="M0 2 H8 M0 5 H8 M2 8 H10" stroke="#2b5a94" strokeWidth="2" /></svg>
        Z3 NTi Event Audio and TA Lärm Demo - XL2 Data Explorer 1.10
      </h1>
      <div className="relative flex h-[13px] overflow-hidden rounded-bl border border-t-0 border-[#c8d2e4] text-white">
        <button type="button" aria-label="Minimize" className="flex w-7 justify-center border-r border-[#c8d2e4] bg-[#4a5f8a] pt-1">
          <svg viewBox="0 0 10 4" className="h-1 w-[10px]"><rect width="10" height="3" fill="#fff" /></svg>
        </button>
        <button type="button" aria-label="Restore" className="flex w-[27px] justify-center border-r border-[#c8d2e4] bg-[#4a5f8a]">
          <svg viewBox="0 0 10 8" className="h-2 w-[10px]"><path d="M1 -1 V7 H7 V-1 M9 -1 V5" stroke="#fff" strokeWidth="2" fill="none" /></svg>
        </button>
        <button type="button" aria-label="Close" className="flex w-11 justify-center bg-[#c23a2c]">
          <svg viewBox="0 0 10 8" className="h-2 w-[10px]"><path d="M1 -2 L9 7 M9 -2 L1 7" stroke="#fff" strokeWidth="2.5" /></svg>
        </button>
      </div>
    </header>
  );
}

function MenuBar() {
  return (
    <nav className="flex h-[19px] items-end gap-4 bg-linear-to-b from-[#fafafa] to-[#dedbda]">
      {['File', 'View', 'Markers', 'Help'].map((item) => (
        <button key={item} type="button" className="text-[11px] leading-[16px] text-[#1c1c1c]">{item}</button>
      ))}
    </nav>
  );
}

function Toolbar() {
  return (
    <div className="flex h-[44px] items-center">
      <div className="flex h-[44px] items-center bg-linear-to-b from-white to-[#f4f4f6]">
        <button type="button" aria-label="Back" className="flex h-[38px] w-[34px] shrink-0 items-center">
          <svg viewBox="0 0 30 30" className="h-[30px] w-[30px]">
            <defs>
              <linearGradient id="arrowFill" x2="0" y2="1">
                <stop offset="0" stopColor="#5cc4f2" />
                <stop offset="1" stopColor="#1684cc" />
              </linearGradient>
            </defs>
            <path d="M0 15 L15 1.5 V9 H29.5 V21 H15 V28.5 Z" fill="url(#arrowFill)" stroke="#1b6fa6" />
          </svg>
        </button>
        <Divider />
        <Tool icon="chart" label="Time chart" active />
        <Tool icon="sum" label="Report table" />
        <Divider />
        <Tool icon="weights" label="Weightings" />
        <Divider />
        <Tool icon="print" label="Print" />
        <Tool icon="preview" label="Print preview" />
        <Tool icon="report" label="Report" />
        <Overflow />
        <Tool icon="zoomArea" label="Zoom area" />
        <Tool icon="zoom" label="Zoom out" />
        <Tool icon="panLeft" label="Pan left" />
        <Tool icon="panRight" label="Pan right" />
        <Divider />
        <Tool icon="bars" label="Spectrum" active />
        <div className="flex items-center pl-1 pr-[2px]">
          <Tool icon="palette" label="Spectrogram" />
          <Tool icon="flag" label="Add marker" />
        </div>
        <label className="flex h-[22px] w-[100px] items-center gap-1 rounded-[3px] border border-[#707070] bg-white pl-[5px]">
          <span className="h-[10px] w-[10px] shrink-0 border border-black bg-[#d4d4d4]" />
          <select aria-label="Marker type" className="w-full appearance-none bg-transparent text-[11px] leading-[16px]">
            <option>-Exclude</option>
          </select>
          <svg viewBox="0 0 8 5" className="mr-[5px] h-[5px] w-2 shrink-0"><path d="M0 0 H8 L4 5 Z" /></svg>
        </label>
        <Overflow />
        <Tool icon="percent" label="Statistics" />
        <Overflow />
      </div>
    </div>
  );
}

function Group({ title, children }) {
  return (
    <fieldset className="min-w-0 rounded-l-sm border border-r-0 border-[#dcdcdc] pb-[2px] pl-[5px] pr-[3px]">
      <legend className="px-[2px] text-[11px] font-bold leading-[14px] text-black">{title}</legend>
      <div className="pt-1">{children}</div>
    </fieldset>
  );
}

function Row({ label, value, mono, tone = 'text-[#222]', shaded }) {
  return (
    <tr className={`${tone} ${shaded ? 'bg-[#f4f4f4]' : ''}`}>
      <th scope="row" className="p-0 text-left text-[11px] font-normal leading-[18px]">{label}</th>
      <td className={mono ? "p-0 text-right align-top font-['Liberation_Mono',monospace] text-[12px] leading-[14px]" : 'p-0 text-right text-[11px] leading-[18px]'}>
        {value}
      </td>
    </tr>
  );
}

function SidePanel() {
  const [agc, setAgc] = useState(true);
  const [gain, setGain] = useState(50);

  return (
    <aside className="flex flex-col gap-[5px] pt-[6px]">
      <Group title="Audio">
        <div className="flex gap-[2px]">
          <button type="button" aria-label="Play">
            <svg viewBox="0 0 24 24" className="h-6 w-6">
              <circle cx="12" cy="12" r="11.3" fill="#2c6cb8" stroke="#1d3f78" />
              <path d="M1.5 12 A10.5 10.5 0 0 1 22.5 12 Q12 14 1.5 12Z" fill="#84aede" />
              <path d="M8.5 5.5 L18 12 L8.5 18.5 Z" fill="#fff" />
            </svg>
          </button>
          <button type="button" aria-label="Stop">
            <svg viewBox="0 0 24 24" className="h-6 w-6">
              <circle cx="12" cy="12" r="11.3" fill="#e6e4f0" stroke="#bcb9cf" />
              <rect x="6.5" y="6.5" width="11" height="11" fill="#fff" stroke="#b3b4cc" />
            </svg>
          </button>
        </div>
        <div className="flex h-8 items-center text-[11px] text-[#222]">
          <label className="flex items-center gap-[5px]">
            <input type="checkbox" checked={agc} onChange={(e) => setAgc(e.target.checked)} className="peer sr-only" />
            <svg viewBox="0 0 12 12" className="h-3 w-3 border border-[#7c8290] bg-[#f2f4fa]">
              {agc && <path d="M2.5 5.5 L5 9 L9.5 2" stroke="#1e2c70" strokeWidth="2" fill="none" />}
            </svg>
            AGC
          </label>
          <input
            type="range"
            aria-label="Gain"
            value={gain}
            onChange={(e) => setGain(e.target.value)}
            className="ml-[6px] h-[22px] w-[103px] appearance-none bg-transparent [&::-webkit-slider-runnable-track]:h-px [&::-webkit-slider-runnable-track]:bg-[#a8a8a8] [&::-webkit-slider-thumb]:mt-[-10px] [&::-webkit-slider-thumb]:h-[22px] [&::-webkit-slider-thumb]:w-[11px] [&::-webkit-slider-thumb]:appearance-none [&::-webkit-slider-thumb]:border [&::-webkit-slider-thumb]:border-[#b4b4b4] [&::-webkit-slider-thumb]:bg-[#f0f0f0]"
          />
          <span className="ml-auto whitespace-nowrap">0 dB</span>
        </div>
      </Group>

      <Group title="Cursor">
        <table className="w-full border-collapse">
          <tbody>
            <Row label="Position" />
            <Row label="Time Resolution" value="0:00:01" mono />
            <Row label="LAeq_dt" tone="text-[#1414d2]" shaded />
            <Row label="LAFmax_dt" tone="text-[#c01818]" />
            <Row label="LAFT5eq_dt" tone="text-[#92cc50]" shaded />
          </tbody>
        </table>
      </Group>

      <Group title="Project Result">
        <table className="w-full border-collapse">
          <tbody>
            <Row label="Start" value="20 Jan 17:11:00" mono />
            <Row label="End" value="20 Jan 17:16:00" mono />
            <Row label="Duration" value="0:05:00" mono />
            <Row label="LAeq" value="62,2 dB" tone="text-[#1f4e9c]" shaded />
            <Row label="LAFmax" value="72,8 dB" tone="text-[#981c1c]" />
            <Row label="LAFT5eq" value="65,9 dB" tone="text-[#6c9440]" shaded />
          </tbody>
        </table>
      </Group>
    </aside>
  );
}

export default function App() {
  return (
    <div className="flex min-h-screen flex-col overflow-x-hidden bg-white font-['Open_Sans',sans-serif] text-[11px]">
      <TitleBar />
      <MenuBar />
      <Toolbar />

      <main className="flex grow flex-col">
        <div className="grid grid-cols-[minmax(0,1fr)_191px]">
          <div className="flex flex-col pl-[53px] pr-[44px] pt-[13px] pb-[31px]">
            <OverviewChart />
            <div className="pt-8"><AudioTrack /></div>
            <div className="pt-[26px]"><LevelChart /></div>
          </div>
          <SidePanel />
        </div>

        <div className="h-[3px] bg-[#b8b8b8]" />

        <div className="grid grid-cols-[minmax(0,1fr)_191px] font-['Liberation_Sans',sans-serif] text-[13px] leading-[21px]">
          <section className="pl-[53px] pr-[44px] pb-[31px]">
            <h2 className="pr-5 text-center">LZeq</h2>
            <Spectrogram />
          </section>
          <section className="pl-[38px] pr-[5px]">
            <h2 className="whitespace-nowrap pl-1">Project Result RTA</h2>
            <RtaChart />
          </section>
        </div>
      </main>

      <footer className="flex h-[19px] items-end bg-[#f0eeec] text-[11px] leading-[16px] text-[#222]">
        <span className="border-r border-[#dedcda] pr-1">XL2 A2A-02868-D2 2.70</span>
        <span className="ml-auto border-l border-[#dedcda] px-[10px]">Start: 2014-01-20 17:11:00 End: 2014-01-20 17:16:00</span>
        <span className="border-l border-[#dedcda] pl-1 pr-3">Samples: 300/3.000</span>
      </footer>
    </div>
  );
}
